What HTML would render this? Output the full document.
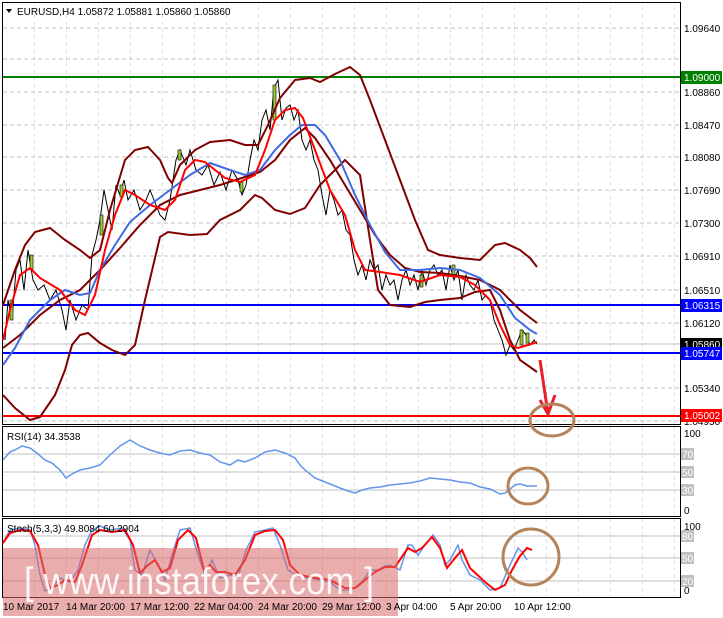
<!DOCTYPE html>
<html><head><meta charset="utf-8"><style>
html,body{margin:0;padding:0;background:#fff;width:723px;height:618px;overflow:hidden}
svg{display:block}
text{font-family:"Liberation Sans",sans-serif;font-size:10px}
</style></head><body>
<svg width="723" height="618" viewBox="0 0 723 618" xmlns="http://www.w3.org/2000/svg">
<defs>
<pattern id="vg" x="3" y="0" width="32" height="618" patternUnits="userSpaceOnUse">
<line x1="32" y1="0" x2="32" y2="618" stroke="#c0c0c0" stroke-dasharray="4,3"/>
</pattern>
</defs>
<rect x="3" y="3" width="677" height="421" fill="url(#vg)"/>
<rect x="3" y="427" width="677" height="89" fill="url(#vg)"/>
<rect x="3" y="519" width="677" height="78" fill="url(#vg)"/>
<g stroke="#c0c0c0" stroke-dasharray="4,3">
<line x1="3" x2="680" y1="28" y2="28"/><line x1="3" x2="680" y1="59" y2="59"/><line x1="3" x2="680" y1="92" y2="92"/>
<line x1="3" x2="680" y1="125" y2="125"/><line x1="3" x2="680" y1="157" y2="157"/><line x1="3" x2="680" y1="190" y2="190"/>
<line x1="3" x2="680" y1="223" y2="223"/><line x1="3" x2="680" y1="256" y2="256"/><line x1="3" x2="680" y1="290" y2="290"/>
<line x1="3" x2="680" y1="323" y2="323"/><line x1="3" x2="680" y1="388" y2="388"/><line x1="3" x2="680" y1="421" y2="421"/>
</g>
<g stroke="#c0c0c0">
<line x1="3" x2="680" y1="344" y2="344"/>
<line x1="3" x2="680" y1="454" y2="454"/><line x1="3" x2="680" y1="472" y2="472"/><line x1="3" x2="680" y1="490" y2="490"/>
<line x1="3" x2="680" y1="536" y2="536"/><line x1="3" x2="680" y1="558" y2="558"/><line x1="3" x2="680" y1="581" y2="581"/>
</g>
<g fill="none" stroke="#000">
<rect x="2.5" y="2.5" width="678" height="422"/>
<rect x="2.5" y="426.5" width="678" height="90"/>
<rect x="2.5" y="518.5" width="678" height="79"/>
</g>
<line x1="3" x2="680" y1="77" y2="77" stroke="#008000" stroke-width="2"/>
<line x1="3" x2="680" y1="305" y2="305" stroke="#0000ff" stroke-width="2"/>
<line x1="3" x2="680" y1="353" y2="353" stroke="#0000ff" stroke-width="2"/>
<line x1="3" x2="680" y1="416" y2="416" stroke="#ff0000" stroke-width="2"/>
<polyline fill="none" stroke="#000" stroke-width="1" points="5,340 8,300 12,320 16,270 20,260 24,290 28,250 33,280 38,290 44,285 50,300 56,290 62,310 66,330 70,300 76,320 82,305 88,310 92,255 96,240 100,220 104,190 108,210 112,230 116,185 120,195 124,180 128,200 134,190 140,210 146,200 150,190 156,205 160,215 165,220 170,200 176,160 180,150 186,165 190,150 196,170 202,175 208,165 214,185 220,172 226,190 232,170 238,180 242,195 246,185 250,160 254,140 258,150 262,120 266,110 270,130 274,88 278,80 282,120 286,108 290,105 294,120 298,110 302,140 306,150 310,140 314,160 318,170 322,195 326,215 330,190 334,200 338,215 342,210 346,230 350,235 354,260 358,275 362,265 366,280 370,260 374,270 378,265 382,290 386,275 390,285 394,280 398,300 402,280 406,270 410,285 414,275 418,290 422,270 426,285 430,270 434,265 438,275 442,270 446,290 450,265 454,280 458,270 462,300 466,275 470,285 474,290 478,280 482,300 486,295 490,300 494,320 498,330 502,340 506,355 510,345 514,350 518,340 522,330 526,335 530,345 534,340 537,344"/>
<g fill="#9acd32" stroke="#000" stroke-width="0.6">
<rect x="10" y="300" width="3" height="20"/><rect x="30" y="255" width="3" height="15"/><rect x="100" y="215" width="3" height="20"/><rect x="120" y="185" width="3" height="12"/>
<rect x="178" y="150" width="3" height="10"/><rect x="240" y="182" width="3" height="10"/><rect x="273" y="85" width="3" height="35"/><rect x="420" y="275" width="3" height="12"/>
<rect x="452" y="265" width="3" height="12"/><rect x="520" y="330" width="3" height="15"/><rect x="526" y="333" width="3" height="10"/>
</g>
<g fill="none" stroke="#800000" stroke-width="2">
<polyline points="3,305 15,270 25,245 35,232 50,228 65,240 80,250 90,258 100,250 110,210 125,160 135,150 148,147 160,160 168,178 172,183 180,165 195,150 210,142 230,140 245,145 258,145 268,125 280,98 295,80 310,78 320,82 335,74 350,67 360,75 370,100 385,140 400,180 415,220 428,250 440,255 460,258 480,260 495,245 505,243 520,250 530,258 537,267"/>
<polyline points="3,395 15,408 30,420 40,417 55,395 65,370 72,345 80,335 88,333 100,343 112,350 125,355 135,345 145,300 160,237 168,232 190,235 207,234 220,220 240,210 255,195 262,198 275,210 290,214 305,208 320,185 335,170 345,160 360,175 370,240 378,290 390,305 410,307 425,302 440,300 460,298 475,292 490,290 500,310 510,340 520,360 530,367 537,372"/>
<polyline points="3,348 20,335 40,315 60,300 80,290 100,270 120,248 140,225 160,205 180,195 200,190 220,185 245,177 260,172 275,160 290,140 305,128 315,138 330,160 345,185 360,210 375,235 390,255 405,268 420,272 440,273 460,276 480,280 500,290 520,310 537,323"/>
</g>
<polyline fill="none" stroke="#4169e1" stroke-width="2" points="3,365 15,348 30,320 50,300 65,290 80,295 90,293 100,270 115,245 130,222 150,205 170,190 190,175 210,163 230,170 245,175 260,170 275,150 290,135 302,125 315,125 325,135 340,160 355,195 370,225 385,252 400,270 420,270 440,268 460,270 480,278 500,295 515,318 530,330 537,334"/>
<polyline fill="none" stroke="#ff0000" stroke-width="2" points="3,340 10,310 20,275 30,268 40,278 60,290 75,310 85,315 95,295 105,250 115,215 125,190 135,195 150,205 165,210 175,200 185,170 195,160 205,162 215,170 225,178 240,182 255,175 265,150 275,120 285,110 295,108 303,118 315,150 330,190 345,215 355,250 365,270 380,272 400,275 420,282 440,275 460,277 475,285 490,300 500,325 510,345 518,348 528,345 537,342"/>
<polyline fill="none" stroke="#e8202a" stroke-width="3" points="540,360 548,414"/>
<polyline fill="none" stroke="#e8202a" stroke-width="3" points="540,400 548,414 555,395"/>
<ellipse cx="552" cy="420" rx="22" ry="16" fill="none" stroke="#b5835a" stroke-width="3"/>
<polygon points="6,9 12,9 9,13" fill="#000"/>
<text x="17" y="15" fill="#000">EURUSD,H4  1.05872 1.05881 1.05860 1.05860</text>
<g fill="#000">
<text x="684" y="32">1.09640</text><text x="684" y="96">1.08860</text><text x="684" y="129">1.08470</text>
<text x="684" y="161">1.08080</text><text x="684" y="194">1.07690</text><text x="684" y="227">1.07300</text>
<text x="684" y="260">1.06910</text><text x="684" y="294">1.06510</text><text x="684" y="327">1.06120</text>
<text x="684" y="392">1.05340</text><text x="684" y="425">1.04950</text>
</g>
<rect x="681" y="71" width="41" height="13" fill="#008000"/><text x="684" y="81" fill="#fff">1.09000</text>
<rect x="681" y="299" width="41" height="13" fill="#0000ff"/><text x="684" y="309" fill="#fff">1.06315</text>
<rect x="681" y="338" width="41" height="13" fill="#000"/><text x="684" y="348" fill="#fff">1.05860</text>
<rect x="681" y="347" width="41" height="13" fill="#0000ff"/><text x="684" y="357" fill="#fff">1.05747</text>
<rect x="681" y="409" width="41" height="13" fill="#ff0000"/><text x="684" y="419" fill="#fff">1.05002</text>
<text x="7" y="440" fill="#000">RSI(14) 34.3538</text>
<polyline fill="none" stroke="#6495ed" stroke-width="1.5" points="3,460 10,452 15,450 22,446 30,448 38,454 45,460 52,463 60,470 66,478 72,474 80,470 90,468 100,465 110,455 120,446 130,440 140,446 150,450 160,453 170,455 180,451 190,450 200,453 210,455 220,462 230,465 238,460 245,462 255,458 265,452 275,450 285,453 295,458 300,465 305,470 315,478 320,480 330,484 340,488 348,491 355,493 362,490 370,488 380,487 390,485 400,484 410,483 420,481 430,478 440,479 450,480 460,482 470,483 480,487 490,489 500,494 505,493 510,489 515,485 520,484 527,486 537,486"/>
<ellipse cx="528" cy="486" rx="20" ry="18" fill="none" stroke="#b5835a" stroke-width="3"/>
<g fill="#000"><text x="684" y="437">100</text><text x="684" y="514">0</text></g>
<g fill="#fff"><rect x="681" y="448" width="13" height="12" fill="#c0c0c0"/><text x="682" y="458">70</text>
<rect x="681" y="466" width="13" height="12" fill="#c0c0c0"/><text x="682" y="476">50</text>
<rect x="681" y="484" width="13" height="12" fill="#c0c0c0"/><text x="682" y="494">30</text></g>
<polyline fill="none" stroke="#6495ed" stroke-width="1.5" points="3,543 10,530 20,528 30,530 35,545 40,575 45,591 52,588 60,578 70,582 78,570 85,545 92,530 100,526 110,530 122,528 130,540 135,570 142,575 150,550 158,565 165,580 172,555 180,530 190,528 198,555 205,575 212,560 220,578 230,575 238,577 246,550 255,532 265,530 273,528 280,545 288,570 300,577 310,578 320,580 330,582 340,590 350,590 360,585 370,570 378,570 385,566 390,565 400,570 408,545 412,545 418,555 425,545 433,535 440,545 445,565 450,560 458,545 462,560 470,575 480,580 490,590 500,588 510,565 518,548 522,552 527,560"/>
<polyline fill="none" stroke="#ff0000" stroke-width="2" points="3,543 10,533 20,530 30,531 38,545 45,575 50,588 58,585 65,580 75,582 82,565 92,535 100,530 112,532 125,530 133,545 140,573 148,565 155,560 162,572 170,568 178,540 188,530 196,538 204,570 210,565 216,572 225,572 235,575 245,560 255,535 265,531 275,530 283,540 290,565 300,575 315,578 330,580 345,588 355,588 365,580 375,572 385,567 395,567 408,548 415,552 422,548 432,537 440,548 447,568 455,558 462,550 470,568 485,582 495,590 505,585 512,570 520,556 527,548 532,550"/>
<ellipse cx="531" cy="557" rx="28" ry="28" fill="none" stroke="#b5835a" stroke-width="3"/>
<text x="7" y="532" fill="#000">Stoch(5,3,3) 49.8084 60.2904</text>
<rect x="3" y="548" width="395" height="68" fill="#d86a6a" fill-opacity="0.55"/>
<text x="24" y="594" fill="#fff" fill-opacity="0.9" style="font-size:38px" textLength="350" lengthAdjust="spacingAndGlyphs">[ www.instaforex.com ]</text>
<g fill="#000"><text x="684" y="530">100</text><text x="684" y="594">0</text></g>
<g fill="#fff"><rect x="681" y="530" width="13" height="12" fill="#c0c0c0"/><text x="682" y="540">80</text>
<rect x="681" y="552" width="13" height="12" fill="#c0c0c0"/><text x="682" y="562">50</text>
<rect x="681" y="575" width="13" height="12" fill="#c0c0c0"/><text x="682" y="585">20</text></g>
<g fill="#000">
<text x="3" y="610">10 Mar 2017</text><text x="66" y="610">14 Mar 20:00</text><text x="130" y="610">17 Mar 12:00</text>
<text x="194" y="610">22 Mar 04:00</text><text x="258" y="610">24 Mar 20:00</text><text x="322" y="610">29 Mar 12:00</text>
<text x="386" y="610">3 Apr 04:00</text><text x="450" y="610">5 Apr 20:00</text><text x="514" y="610">10 Apr 12:00</text>
</g>
</svg>
</body></html>
